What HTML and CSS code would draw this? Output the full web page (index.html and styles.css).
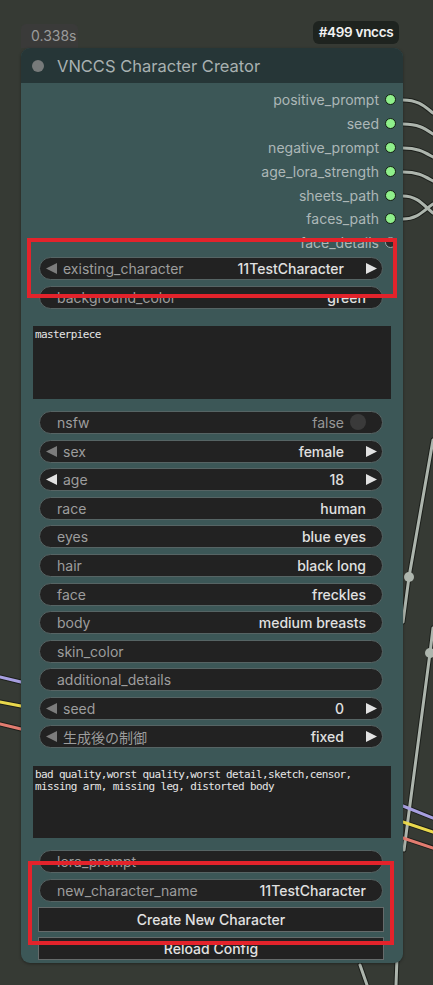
FILE: index.html
```html
<!DOCTYPE html>
<html lang="en">
<head>
<meta charset="utf-8">
<title>VNCCS Character Creator</title>
<link rel="stylesheet" href="styles.css">
</head>
<body>
<div class="canvas">
  <svg class="wires" width="433" height="985" viewBox="0 0 433 985">
    <g class="wire-shadow">
      <path d="M403,100 C418,100 424,106 433,113"/>
      <path d="M403,124 C418,124 424,128 433,134"/>
      <path d="M403,148 C418,148 424,152 433,157"/>
      <path d="M403,172 C418,172 424,176 433,181"/>
      <path d="M403,196 C418,196 424,206 433,213"/>
      <path d="M403,219 C418,219 424,210 433,204"/>
      <path d="M433,440 L409,577 L403,622"/>
      <path d="M433,628 L430,653 L404,850"/>
      <path d="M360,965 L367,985"/>
      <path d="M397,958 L396,985"/>
      <path d="M0,677 L21,682"/>
      <path d="M0,702 L21,706"/>
      <path d="M0,724 L21,729"/>
      <path d="M403,806 L433,818"/>
      <path d="M403,822 L433,832"/>
      <path d="M403,838 L433,848"/>
    </g>
    <g class="wire-gray">
      <path d="M403,100 C418,100 424,106 433,113"/>
      <path d="M403,124 C418,124 424,128 433,134"/>
      <path d="M403,148 C418,148 424,152 433,157"/>
      <path d="M403,172 C418,172 424,176 433,181"/>
      <path d="M403,196 C418,196 424,206 433,213"/>
      <path d="M403,219 C418,219 424,210 433,204"/>
      <path d="M433,440 L409,577 L403,622"/>
      <path d="M433,628 L430,653 L404,850"/>
      <path d="M360,965 L367,985"/>
      <path d="M397,958 L396,985"/>
    </g>
    <circle class="reroute" cx="409" cy="577" r="5"/>
    <circle class="reroute" cx="430" cy="653" r="5"/>
    <g class="wire-purple">
      <path d="M0,677 L21,682"/>
      <path d="M403,806 L433,818"/>
    </g>
    <g class="wire-yellow">
      <path d="M0,702 L21,706"/>
      <path d="M403,822 L433,832"/>
    </g>
    <g class="wire-salmon">
      <path d="M0,724 L21,729"/>
      <path d="M403,838 L433,848"/>
    </g>
  </svg>

  <div class="timing">0.338s</div>
  <div class="badge">#499 vnccs</div>

  <div class="node">
    <div class="node-title">
      <span class="title-dot"></span>
      <span class="title-text">VNCCS Character Creator</span>
    </div>
    <div class="node-body">
      <div class="outputs">
        <div class="out"><span>positive_prompt</span><i class="slot"></i></div>
        <div class="out"><span>seed</span><i class="slot"></i></div>
        <div class="out"><span>negative_prompt</span><i class="slot"></i></div>
        <div class="out"><span>age_lora_strength</span><i class="slot"></i></div>
        <div class="out"><span>sheets_path</span><i class="slot"></i></div>
        <div class="out"><span>faces_path</span><i class="slot"></i></div>
        <div class="out"><span>face_details</span><i class="slot slot-empty"></i></div>
      </div>

      <div class="pill combo first">
        <svg class="arr dim" viewBox="0 0 11 11"><polygon points="11,0 11,11 0,5.5"/></svg>
        <span class="lbl">existing_character</span>
        <span class="val">11TestCharacter</span>
        <svg class="arr" viewBox="0 0 11 11"><polygon points="0,0 0,11 11,5.5"/></svg>
      </div>
      <div class="pill plain">
        <span class="lbl">background_color</span>
        <span class="val">green</span>
      </div>

      <div class="textarea ta-1">masterpiece</div>

      <div class="pill plain toggle sec">
        <span class="lbl">nsfw</span>
        <span class="off">false</span>
        <span class="knob"></span>
      </div>
      <div class="pill combo">
        <svg class="arr dim" viewBox="0 0 11 11"><polygon points="11,0 11,11 0,5.5"/></svg>
        <span class="lbl">sex</span>
        <span class="val">female</span>
        <svg class="arr" viewBox="0 0 11 11"><polygon points="0,0 0,11 11,5.5"/></svg>
      </div>
      <div class="pill combo">
        <svg class="arr" viewBox="0 0 11 11"><polygon points="11,0 11,11 0,5.5"/></svg>
        <span class="lbl">age</span>
        <span class="val">18</span>
        <svg class="arr" viewBox="0 0 11 11"><polygon points="0,0 0,11 11,5.5"/></svg>
      </div>
      <div class="pill plain"><span class="lbl">race</span><span class="val">human</span></div>
      <div class="pill plain"><span class="lbl">eyes</span><span class="val">blue eyes</span></div>
      <div class="pill plain"><span class="lbl">hair</span><span class="val">black long</span></div>
      <div class="pill plain"><span class="lbl">face</span><span class="val">freckles</span></div>
      <div class="pill plain"><span class="lbl">body</span><span class="val">medium breasts</span></div>
      <div class="pill plain"><span class="lbl">skin_color</span></div>
      <div class="pill plain"><span class="lbl">additional_details</span></div>
      <div class="pill combo">
        <svg class="arr dim" viewBox="0 0 11 11"><polygon points="11,0 11,11 0,5.5"/></svg>
        <span class="lbl">seed</span>
        <span class="val">0</span>
        <svg class="arr" viewBox="0 0 11 11"><polygon points="0,0 0,11 11,5.5"/></svg>
      </div>
      <div class="pill combo">
        <svg class="arr dim" viewBox="0 0 11 11"><polygon points="11,0 11,11 0,5.5"/></svg>
        <span class="lbl cjk">生成後の制御</span>
        <span class="val">fixed</span>
        <svg class="arr" viewBox="0 0 11 11"><polygon points="0,0 0,11 11,5.5"/></svg>
      </div>

      <div class="textarea ta-2">bad quality,worst quality,worst detail,sketch,censor,
missing arm, missing leg, distorted body</div>

      <div class="pill plain sec"><span class="lbl">lora_prompt</span></div>
      <div class="pill plain name"><span class="lbl">new_character_name</span><span class="val">11TestCharacter</span></div>

      <div class="btn btn-create">Create New Character</div>
      <div class="btn btn-reload">Reload Config</div>
    </div>
  </div>

  <div class="mark mark-1"></div>
  <div class="mark mark-2"></div>
</div>
</body>
</html>
```

FILE: styles.css
```css
* { box-sizing: border-box; }

html, body {
  margin: 0;
  padding: 0;
}

body {
  width: 433px;
  height: 985px;
  overflow: hidden;
  background: #363a34;
  font-family: Inter, "Noto Sans CJK JP", sans-serif;
}

.canvas {
  position: relative;
  width: 433px;
  height: 985px;
  background: #363a34;
}

.wires {
  position: absolute;
  left: 0;
  top: 0;
}

.wires path {
  fill: none;
  stroke-linecap: round;
}

.wire-shadow path {
  stroke: #1c1f1b;
  stroke-width: 5;
}

.wire-gray path {
  stroke: #adb5ad;
  stroke-width: 3;
}

.wire-purple path { stroke: #a79fe0; stroke-width: 3; }
.wire-yellow path { stroke: #e9d84c; stroke-width: 3; }
.wire-salmon path { stroke: #e27c70; stroke-width: 3; }

.reroute {
  fill: #aeb6ae;
}

.timing {
  position: absolute;
  left: 21px;
  top: 24px;
  width: 57px;
  height: 24px;
  padding-left: 10px;
  background: #3a3a39;
  border-radius: 5px 5px 0 0;
  color: #9b9b9b;
  font-size: 14px;
  line-height: 24px;
}

.badge {
  position: absolute;
  left: 313px;
  top: 21px;
  width: 86px;
  height: 23px;
  border-radius: 6px;
  background: #1e231f;
  color: #f2f2f2;
  font-size: 13.5px;
  font-weight: 600;
  line-height: 23px;
  text-align: center;
  letter-spacing: -0.3px;
}

.node {
  position: absolute;
  left: 21px;
  top: 48px;
  width: 382px;
  height: 915px;
  border-radius: 9px;
  background: #3c5757;
  overflow: hidden;
  box-shadow: 0 1px 3px rgba(0, 0, 0, 0.35);
}

.node-title {
  height: 35px;
  background: #263637;
  display: flex;
  align-items: center;
  padding-left: 11px;
  gap: 13px;
}

.title-dot {
  width: 12px;
  height: 12px;
  border-radius: 50%;
  background: #777a7a;
}

.title-text {
  color: #a9b1b1;
  font-size: 16.5px;
}

.node-body {
  display: flex;
  flex-direction: column;
  padding-top: 5px;
}

.outputs {
  display: flex;
  flex-direction: column;
}

.out {
  height: 23.8px;
  display: flex;
  align-items: center;
  justify-content: flex-end;
  gap: 6px;
  padding-right: 7px;
  color: #adb7b7;
  font-size: 14px;
}

.slot {
  display: block;
  width: 11px;
  height: 11px;
  border-radius: 50%;
  background: #8fef8b;
  border: 1px solid #142014;
}

.slot-empty {
  background: #2b2f2f;
  border-color: #9aa;
}

.pill {
  height: 23px;
  margin: 5.6px 20px 0 18px;
  border-radius: 12px;
  background: #222222;
  border: 1px solid #566464;
  display: flex;
  align-items: center;
  font-size: 14px;
  white-space: nowrap;
  overflow: hidden;
}

.pill.first { margin-top: 2.4px; }
.pill.sec { margin-top: 12px; }
.pill.name { margin-top: 6.5px; }

.pill.plain {
  padding: 0 16px 0 17px;
}

.pill.combo {
  padding: 0 5px 0 6px;
}

.lbl {
  color: #9d9d9d;
}

.cjk {
  font-family: "Noto Sans CJK JP", sans-serif;
  font-size: 14px;
}

.combo .lbl {
  margin-left: 6px;
}

.val {
  margin-left: auto;
  color: #e0e0e0;
  font-weight: 500;
}

.combo .val {
  margin-right: 22px;
}

.arr {
  width: 11px;
  height: 11px;
  flex: none;
  fill: #e2e2e2;
}

.arr.dim {
  fill: #7c7c7c;
}

.toggle .off {
  margin-left: auto;
  color: #979797;
}

.toggle {
  padding-right: 7px;
}

.knob {
  width: 16px;
  height: 16px;
  margin-left: 6px;
  border-radius: 50%;
  background: #3a3a3a;
}

.textarea {
  margin: 17.4px 12px 0 12px;
  background: #222222;
  color: #e6e6e6;
  font-family: "DejaVu Sans Mono", "Liberation Mono", monospace;
  font-size: 11px;
  letter-spacing: -0.65px;
  line-height: 12px;
  padding: 3px 2px;
  white-space: pre;
  overflow: hidden;
}

.ta-1 { height: 73px; }
.ta-2 { height: 72px; padding-top: 3px; }

.btn {
  margin: 0 19px 0 17px;
  background: #222222;
  border: 1px solid #656a6a;
  color: #e2e2e2;
  font-size: 14px;
  font-weight: 500;
  display: flex;
  align-items: center;
  justify-content: center;
}

.btn-create {
  height: 25px;
  margin-top: 4.5px;
}

.btn-reload {
  height: 23px;
  margin-top: 5px;
}

.mark {
  position: absolute;
  border: 4px solid #e3232b;
  pointer-events: none;
}

.mark-1 {
  left: 27px;
  top: 238px;
  width: 370px;
  height: 60px;
}

.mark-2 {
  left: 28px;
  top: 861px;
  width: 366px;
  height: 84px;
}
```
